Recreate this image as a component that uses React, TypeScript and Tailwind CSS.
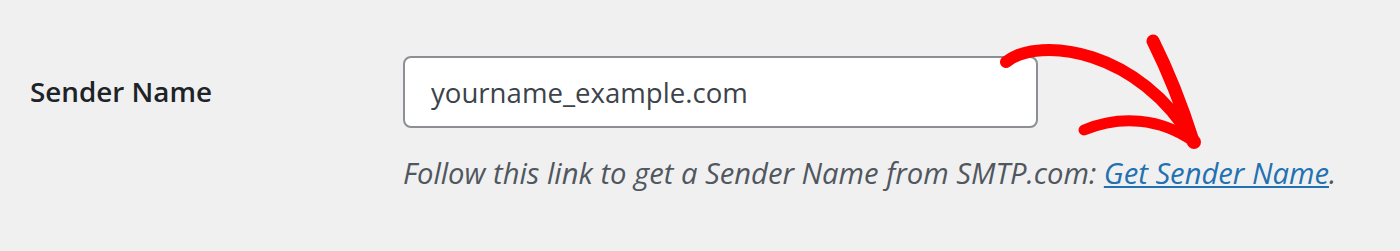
import { ChangeEvent, useState } from "react";

const RedArrow = () => (
  <svg
    className="pointer-events-none absolute left-0 top-0"
    width="1400"
    height="251"
    viewBox="0 0 1400 251"
    fill="none"
  >
    <g stroke="#ff0000" strokeLinecap="round" strokeLinejoin="round">
      <path d="M1006 62 C1040 35, 1140 50, 1193 141" strokeWidth="12" />
      <path d="M1153 41 C1165 65, 1180 100, 1193 141" strokeWidth="13" />
      <path d="M1084 130 C1120 115, 1160 118, 1193 141" strokeWidth="11" />
    </g>
    <circle cx="1194" cy="142" r="7" fill="#ff0000" />
  </svg>
);

export default function App() {
  const [name, setName] = useState("yourname_example.com");

  return (
    <div
      className="relative h-[251px] w-[1400px] overflow-hidden bg-[#f0f0f1]"
      style={{ fontFamily: '"Open Sans", "Noto Sans", sans-serif' }}
    >
      <div className="flex items-start pl-[30px] pt-[56px]">
        <label
          htmlFor="sender-name"
          className="flex h-[72px] w-[373px] shrink-0 items-center text-[27.8px] font-semibold text-[#1d2327]"
        >
          Sender Name
        </label>
        <div className="flex flex-col">
          <input
            id="sender-name"
            value={name}
            onChange={(e: ChangeEvent<HTMLInputElement>) => setName(e.target.value)}
            className="h-[72px] w-[635px] rounded-[8px] border-2 border-[#8c8f94] bg-white px-[26px] text-[27.6px] text-[#3c434a] outline-none"
          />
          <p className="mt-[24px] whitespace-nowrap text-[29.2px] italic text-[#50575e]">
            Follow this link to get a Sender Name from SMTP.com:{" "}
            <a href="#" className="text-[#2271b1] underline">
              Get Sender Name
            </a>
            .
          </p>
        </div>
      </div>
      <RedArrow />
    </div>
  );
}
